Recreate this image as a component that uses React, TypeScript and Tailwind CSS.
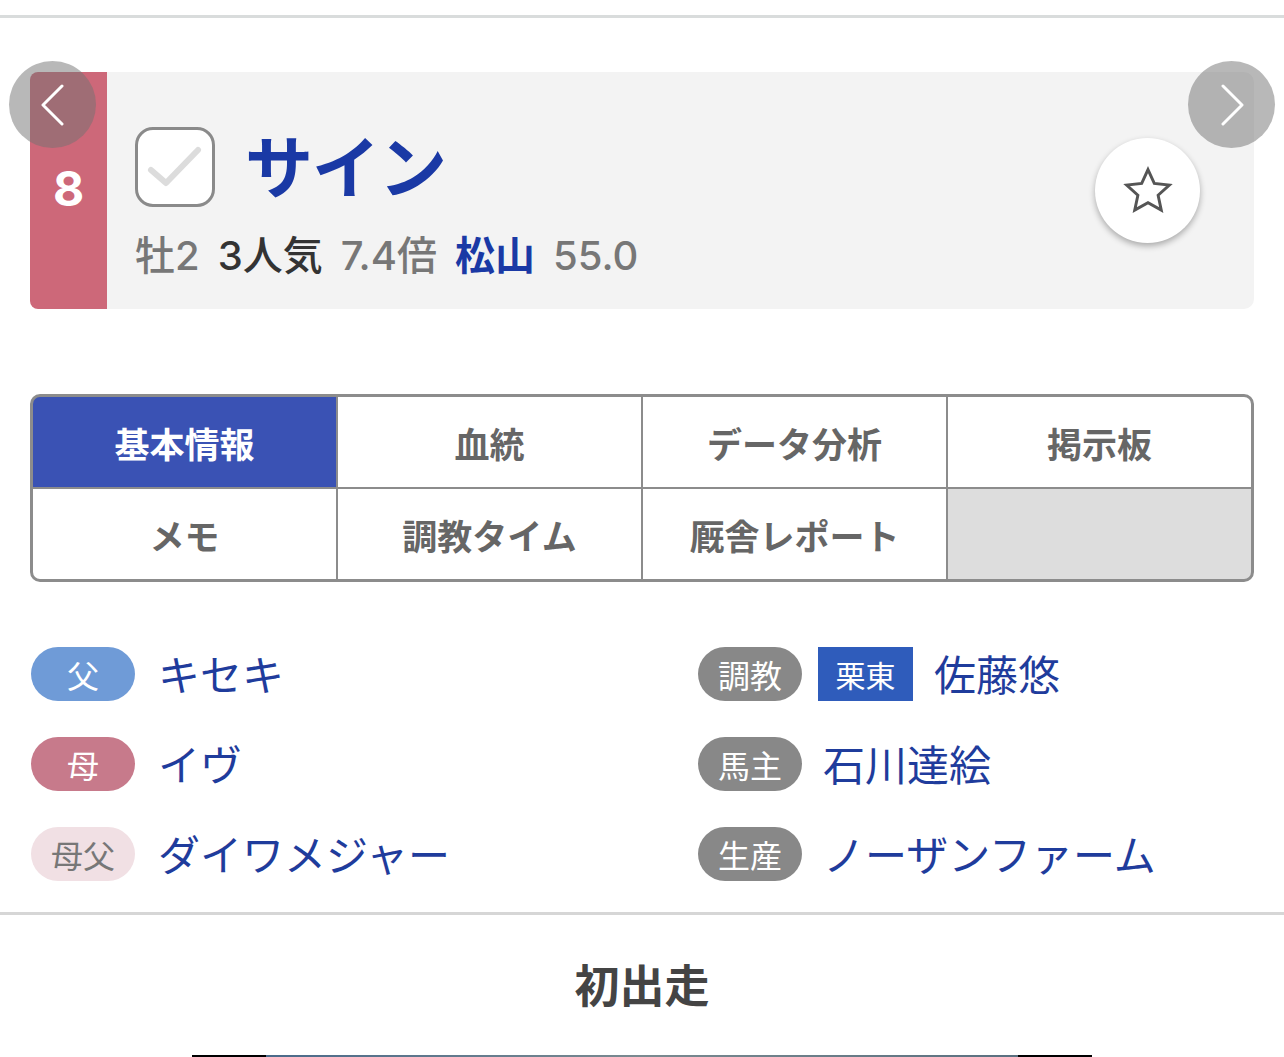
import React from 'react';

const font = { fontFamily: '"Noto Sans CJK JP", "Noto Sans", sans-serif' };
const latin = { fontFamily: 'Inter, "Noto Sans CJK JP", sans-serif' };

const pedigree = [
  { label: '父', name: 'キセキ', pill: 'bg-[#6f9bd7] text-white' },
  { label: '母', name: 'イヴ', pill: 'bg-[#c77a8b] text-white' },
  { label: '母父', name: 'ダイワメジャー', pill: 'bg-[#f1e0e4] text-[#777777]' },
];

const tabs = ['基本情報', '血統', 'データ分析', '掲示板', 'メモ', '調教タイム', '厩舎レポート', ''];

const Pill = ({ label, className }: { label: string; className: string }) => (
  <div className={`w-[104px] h-[54px] rounded-full flex items-center justify-center text-[32px] leading-none shrink-0 ${className}`}>
    {label}
  </div>
);

const App = () => {
  return (
    <div className="w-[1284px] h-[1057px] overflow-hidden bg-white pt-[15px]" style={font}>
      <div className="h-[3px] bg-[#d9dcdc]" />

      {/* horse card */}
      <div className="relative mx-[30px] mt-[54px] h-[237px] flex rounded-[10px] bg-[#f3f3f3]">
        <div className="w-[77px] bg-[#cd6879] rounded-l-[8px] flex items-center justify-center">
          <span className="text-white text-[48px] font-bold leading-none -mt-[4px]" style={latin}>8</span>
        </div>
        <div className="pl-[28px] pt-[55px]">
          <div className="flex items-center h-[80px] gap-[30px]">
            <div className="w-[80px] h-[80px] rounded-[18px] border-[3px] border-[#8a8a8a] bg-white">
              <svg viewBox="0 0 74 74" className="w-full h-full">
                <polyline points="13,40 28,53 60,20" fill="none" stroke="#dcdcdc" strokeWidth="6" strokeLinecap="round" strokeLinejoin="round" />
              </svg>
            </div>
            <span className="text-[68px] font-bold text-[#1a39a5] leading-none tracking-[-1px] -mt-[6px]">サイン</span>
          </div>
          <div className="mt-[29px] flex items-baseline gap-[18px] text-[40px] leading-none font-medium" style={latin}>
            <span className="text-[#777777]">牡2</span>
            <span className="text-[#333333]">3人気</span>
            <span className="text-[#777777]">7.4倍</span>
            <span className="text-[#1a39a5] font-bold">松山</span>
            <span className="text-[#777777]">55.0</span>
          </div>
        </div>

        <button className="absolute left-[-21px] top-[-11px] w-[87px] h-[87px] rounded-full bg-[rgba(113,113,113,0.5)] flex items-center justify-center">
          <svg viewBox="0 0 24 42" className="w-[24px] h-[42px] -ml-[2px]">
            <polyline points="22,2 3,21 22,40" fill="none" stroke="white" strokeWidth="3" strokeLinecap="round" strokeLinejoin="round" />
          </svg>
        </button>
        <button className="absolute right-[-21px] top-[-11px] w-[87px] h-[87px] rounded-full bg-[rgba(113,113,113,0.5)] flex items-center justify-center">
          <svg viewBox="0 0 24 42" className="w-[24px] h-[42px] ml-[2px]">
            <polyline points="2,2 21,21 2,40" fill="none" stroke="white" strokeWidth="3" strokeLinecap="round" strokeLinejoin="round" />
          </svg>
        </button>
        <button className="absolute right-[54px] top-[66px] w-[105px] h-[105px] rounded-full bg-white shadow-[0_3px_6px_rgba(0,0,0,0.3)] flex items-center justify-center">
          <svg viewBox="0 0 24 24" className="w-[54px] h-[54px]">
            <polygon points="12,2.5 14.8,8.6 21.5,9.4 16.5,13.9 17.9,20.5 12,17.2 6.1,20.5 7.5,13.9 2.5,9.4 9.2,8.6" fill="none" stroke="#555555" strokeWidth="1.3" strokeLinejoin="miter" />
          </svg>
        </button>
      </div>

      {/* tabs */}
      <div className="mx-[30px] mt-[85px] grid grid-cols-4 gap-[2px] bg-[#8c8c8c] border-[3px] border-[#8c8c8c] rounded-[10px] overflow-hidden">
        {tabs.map((t, i) => (
          <div
            key={i}
            className={`h-[90px] flex items-center justify-center text-[35px] font-bold leading-none ${
              i === 0 ? 'bg-[#3a52b4] text-white' : t === '' ? 'bg-[#dddddd]' : 'bg-white text-[#666666]'
            }`}
          >
            {t}
          </div>
        ))}
      </div>

      {/* info */}
      <div className="mt-[65px] flex pl-[31px]">
        <div className="w-[667px] flex flex-col gap-[36px]">
          {pedigree.map((p) => (
            <div key={p.label} className="flex items-center gap-[23px]">
              <Pill label={p.label} className={p.pill} />
              <span className="text-[42px] text-[#1f3c9c] leading-none -mt-[3px]">{p.name}</span>
            </div>
          ))}
        </div>
        <div className="flex flex-col gap-[36px]">
          <div className="flex items-center">
            <Pill label="調教" className="bg-[#888888] text-white" />
            <div className="ml-[16px] w-[95px] h-[54px] bg-[#2f5cbb] text-white text-[30px] leading-none flex items-center justify-center">栗東</div>
            <span className="ml-[21px] text-[42px] text-[#1f3c9c] leading-none -mt-[3px]">佐藤悠</span>
          </div>
          <div className="flex items-center gap-[21px]">
            <Pill label="馬主" className="bg-[#888888] text-white" />
            <span className="text-[42px] text-[#1f3c9c] leading-none -mt-[3px]">石川達絵</span>
          </div>
          <div className="flex items-center gap-[21px]">
            <Pill label="生産" className="bg-[#888888] text-white" />
            <span className="text-[42px] text-[#1f3c9c] leading-none -mt-[3px]">ノーザンファーム</span>
          </div>
        </div>
      </div>

      <div className="mt-[31px] h-[3px] bg-[#d6d6d6]" />
      <div className="mt-[46px] text-center text-[45px] font-bold text-[#444444] leading-none">初出走</div>
      <div className="mt-[49px] mx-auto w-[900px] h-[2px] bg-black px-[74px]">
        <div className="h-full bg-gradient-to-r from-[#4a6a8a] via-[#7a8a90] to-[#5a7080]" />
      </div>
    </div>
  );
};

export default App;
